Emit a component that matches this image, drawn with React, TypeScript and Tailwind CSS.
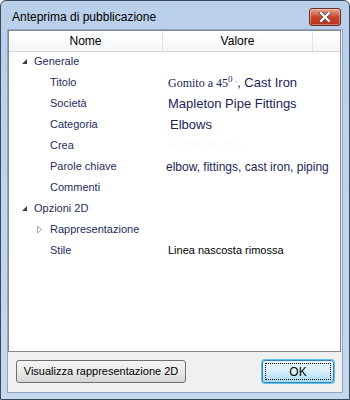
import React from "react";

type Row = {
  name: string;
  level: 0 | 1;
  expander?: "open" | "closed";
  value?: React.ReactNode;
};

const font = { fontFamily: '"Liberation Sans", Arial, sans-serif' };

const rows: Row[] = [
  { name: "Generale", level: 0, expander: "open" },
  {
    name: "Titolo",
    level: 1,
    value: (
      <span className="text-[13px] text-[#1b2559]">
        <span className="text-[12px]" style={{ fontFamily: '"Liberation Serif", serif' }}>
          Gomito a 45<sup className="text-[9px]">0</sup>
          <span className="ml-[3px] text-[9px] text-[#8a8fa8]">'</span>
        </span>
        , Cast Iron
      </span>
    ),
  },
  {
    name: "Società",
    level: 1,
    value: <span className="text-[13px] text-[#1b2559]">Mapleton Pipe Fittings</span>,
  },
  {
    name: "Categoria",
    level: 1,
    value: <span className="pl-[2px] text-[13px] text-[#1b2559]">Elbows</span>,
  },
  {
    name: "Crea",
    level: 1,
    value: <span className="text-[12px] text-[#fafafa]">Autodesk, Inc.</span>,
  },
  {
    name: "Parole chiave",
    level: 1,
    value: (
      <span className="-ml-[2px] text-[12px] text-[#1b2559]">
        elbow, fittings, cast iron, piping
      </span>
    ),
  },
  { name: "Commenti", level: 1 },
  { name: "Opzioni 2D", level: 0, expander: "open" },
  { name: "Rappresentazione", level: 1, expander: "closed" },
  {
    name: "Stile",
    level: 1,
    value: <span className="text-[11px] text-black">Linea nascosta rimossa</span>,
  },
];

function Expander({ kind }: { kind: "open" | "closed" }) {
  if (kind === "open") {
    return (
      <svg width="8" height="8" viewBox="0 0 8 8">
        <polygon points="6,1 6,6 1,6" fill="#3c3c3c" />
      </svg>
    );
  }
  return (
    <svg width="8" height="9" viewBox="0 0 8 9">
      <polygon points="1.5,1 5.5,4.5 1.5,8" fill="none" stroke="#a6a6a6" />
    </svg>
  );
}

function CloseButton() {
  return (
    <div className="flex h-[18px] w-[32px] items-center justify-center rounded-[3px] border border-[#6b2a22] bg-gradient-to-b from-[#e8a493] via-[#c9452c] to-[#b8331e] shadow-[inset_0_0_0_1px_rgba(255,255,255,0.35)]">
      <svg width="12" height="10" viewBox="0 0 12 10">
        <path d="M2 1 L10 9 M10 1 L2 9" stroke="#4a4a4a" strokeWidth="3.6" strokeLinecap="square" />
        <path d="M2 1 L10 9 M10 1 L2 9" stroke="#ffffff" strokeWidth="2.2" strokeLinecap="square" />
      </svg>
    </div>
  );
}

export default function App() {
  return (
    <div
      className="flex h-[400px] w-[350px] flex-col rounded-t-[6px] border border-[#3d4a5c] bg-gradient-to-b from-[#b9cfea] to-[#c6d8ee] px-[6px] pb-[6px]"
      style={font}
    >
      {/* title bar */}
      <div className="flex h-[28px] shrink-0 items-center justify-between pl-[5px] pr-[2px] pt-[4px]">
        <span className="text-[12px] text-black">Anteprima di pubblicazione</span>
        <CloseButton />
      </div>

      {/* client area */}
      <div className="flex flex-1 flex-col border border-[#8fa6c4] bg-[#f0f0f0]">
        <div className="mr-[1px] flex h-[322px] flex-col border border-[#828790] bg-white">
          {/* header */}
          <div className="flex h-[21px] shrink-0 border-b border-[#d5d5d5] bg-gradient-to-b from-white to-[#f3f5f8] text-[12px] text-black">
            <div className="flex w-[154px] items-center justify-center border-r border-[#e3e3e3]">Nome</div>
            <div className="flex w-[150px] items-center justify-center border-r border-[#e3e3e3]">Valore</div>
            <div className="flex-1" />
          </div>

          {/* tree */}
          <div className="-mt-[1px] flex flex-col">
            {rows.map((r) => (
              <div key={r.name} className="flex h-[21px] items-center">
                <div className="flex w-[159px] items-center">
                  {r.level === 0 ? (
                    <div className="flex w-[25px] justify-end pr-[5px]">
                      {r.expander && <Expander kind={r.expander} />}
                    </div>
                  ) : (
                    <div className="flex w-[41px] justify-end pr-[6px]">
                      {r.expander && <Expander kind={r.expander} />}
                    </div>
                  )}
                  <span className="text-[11px] text-[#1e2d5c]">{r.name}</span>
                </div>
                <div className="flex items-center whitespace-nowrap">{r.value}</div>
              </div>
            ))}
          </div>
        </div>

        {/* buttons */}
        <div className="flex items-start justify-between pl-[8px] pr-[8px] pt-[8px]">
          <button className="h-[23px] w-[170px] whitespace-nowrap rounded-[3px] border border-[#707070] bg-gradient-to-b from-[#f2f2f2] via-[#ebebeb] to-[#d6d6d6] text-[11px] text-black">
            Visualizza rappresentazione 2D
          </button>
          <button className="flex h-[23px] w-[72px] items-center justify-center rounded-[3px] border border-[#3c7fb1] bg-gradient-to-b from-[#eaf6fd] via-[#d9f0fc] to-[#a7d9f5] p-[2px] text-[12px] text-black shadow-[0_0_0_1px_#5fc3f0]">
            <span className="flex h-full w-full items-center justify-center border border-dotted border-black">
              OK
            </span>
          </button>
        </div>
      </div>
    </div>
  );
}
